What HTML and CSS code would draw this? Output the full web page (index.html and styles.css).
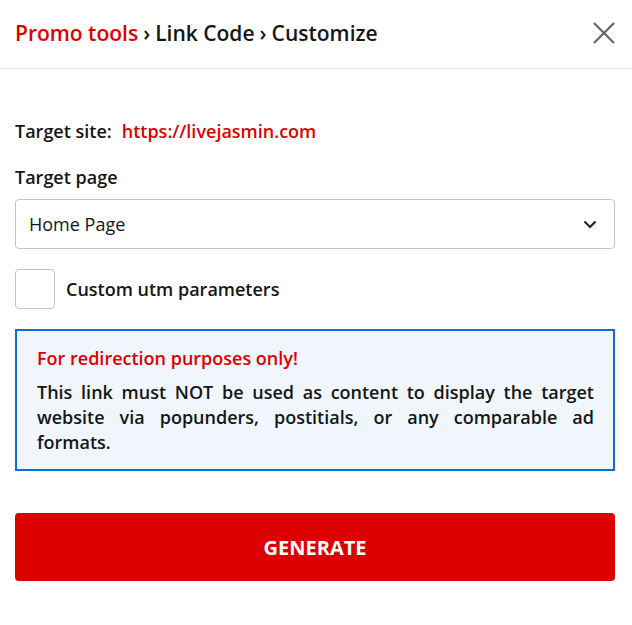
FILE: index.html
```html
<!DOCTYPE html>
<html lang="en">
<head>
    <meta charset="UTF-8">
    <meta name="viewport" content="width=device-width, initial-scale=1.0">
    <title>Customize link</title>
    <link rel="stylesheet" href="styles.css">
</head>
<body>
    <div class="modal">
        <div class="modal-header">
            <div class="crumbs">
                <span class="crumb-first">Promo tools</span>
                <span class="sep">&#8250;</span>
                <span>Link Code</span>
                <span class="sep">&#8250;</span>
                <span>Customize</span>
            </div>
            <button class="close" aria-label="Close">
                <svg width="22" height="22" viewBox="0 0 22 22">
                    <path d="M1 1 L21 21 M21 1 L1 21" stroke="#666" stroke-width="2.2" fill="none"/>
                </svg>
            </button>
        </div>

        <div class="modal-body">
            <div class="target-site">
                <span class="label">Target site:</span>
                <span class="site-url">https://livejasmin.com</span>
            </div>

            <div class="label field-label">Target page</div>
            <div class="select">
                <span>Home Page</span>
                <svg width="14" height="9" viewBox="0 0 14 9">
                    <path d="M1.5 1.5 L7 7 L12.5 1.5" stroke="#222" stroke-width="2.2" fill="none"/>
                </svg>
            </div>

            <label class="check-row">
                <span class="checkbox"></span>
                <span class="label">Custom utm parameters</span>
            </label>

            <div class="notice">
                <div class="notice-title">For redirection purposes only!</div>
                <p>This link must NOT be used as content to display the target website via popunders, postitials, or any comparable ad formats.</p>
            </div>

            <button class="generate">GENERATE</button>
        </div>
    </div>
</body>
</html>
```

FILE: styles.css
```css
body {
    margin: 0;
    font-family: "Open Sans", Arial, sans-serif;
    color: #161616;
    background-color: #fff;
}
.modal {
    width: 632px;
}
.modal-header {
    height: 69px;
    display: flex;
    align-items: center;
    justify-content: space-between;
    padding: 0 17px 2px 15px;
    border-bottom: 1px solid #e4e4e4;
    box-sizing: border-box;
}
.crumbs {
    font-size: 21px;
    font-weight: 600;
    display: flex;
    gap: 5px;
    align-items: center;
}
.crumb-first {
    color: #dd0000;
}
.close {
    border: none;
    background: none;
    padding: 0;
    display: flex;
    cursor: pointer;
}
.modal-body {
    padding: 50px 17px 0 15px;
}
.label {
    font-weight: 600;
    font-size: 18px;
    line-height: 24px;
}
.target-site {
    display: flex;
    gap: 10px;
    align-items: center;
}
.site-url {
    color: #dd0000;
    font-weight: 600;
    font-size: 18px;
    line-height: 24px;
}
.field-label {
    margin-top: 22px;
}
.select {
    margin-top: 10px;
    height: 50px;
    border: 1px solid #c4c4c4;
    border-radius: 4px;
    box-sizing: border-box;
    display: flex;
    align-items: center;
    justify-content: space-between;
    padding: 0 17px 0 13px;
    font-size: 18px;
}
.check-row {
    margin-top: 20px;
    display: flex;
    align-items: center;
    gap: 11px;
}
.checkbox {
    width: 40px;
    height: 40px;
    border: 1px solid #c4c4c4;
    border-radius: 4px;
    box-sizing: border-box;
}
.notice {
    margin-top: 20px;
    border: 2px solid #0b6fd3;
    background-color: #f0f6fc;
    padding: 15px 19px 14px 20px;
}
.notice-title {
    color: #dd0000;
    font-weight: 600;
    font-size: 18px;
    line-height: 24px;
}
.notice p {
    margin: 10px 0 0;
    font-weight: 600;
    font-size: 18px;
    line-height: 25px;
    text-align: justify;
}
.generate {
    margin-top: 42px;
    width: 100%;
    height: 68px;
    border: none;
    border-radius: 4px;
    background-color: #dd0000;
    color: #fff;
    font-family: "Open Sans", Arial, sans-serif;
    font-weight: 700;
    font-size: 20px;
    cursor: pointer;
}
```
